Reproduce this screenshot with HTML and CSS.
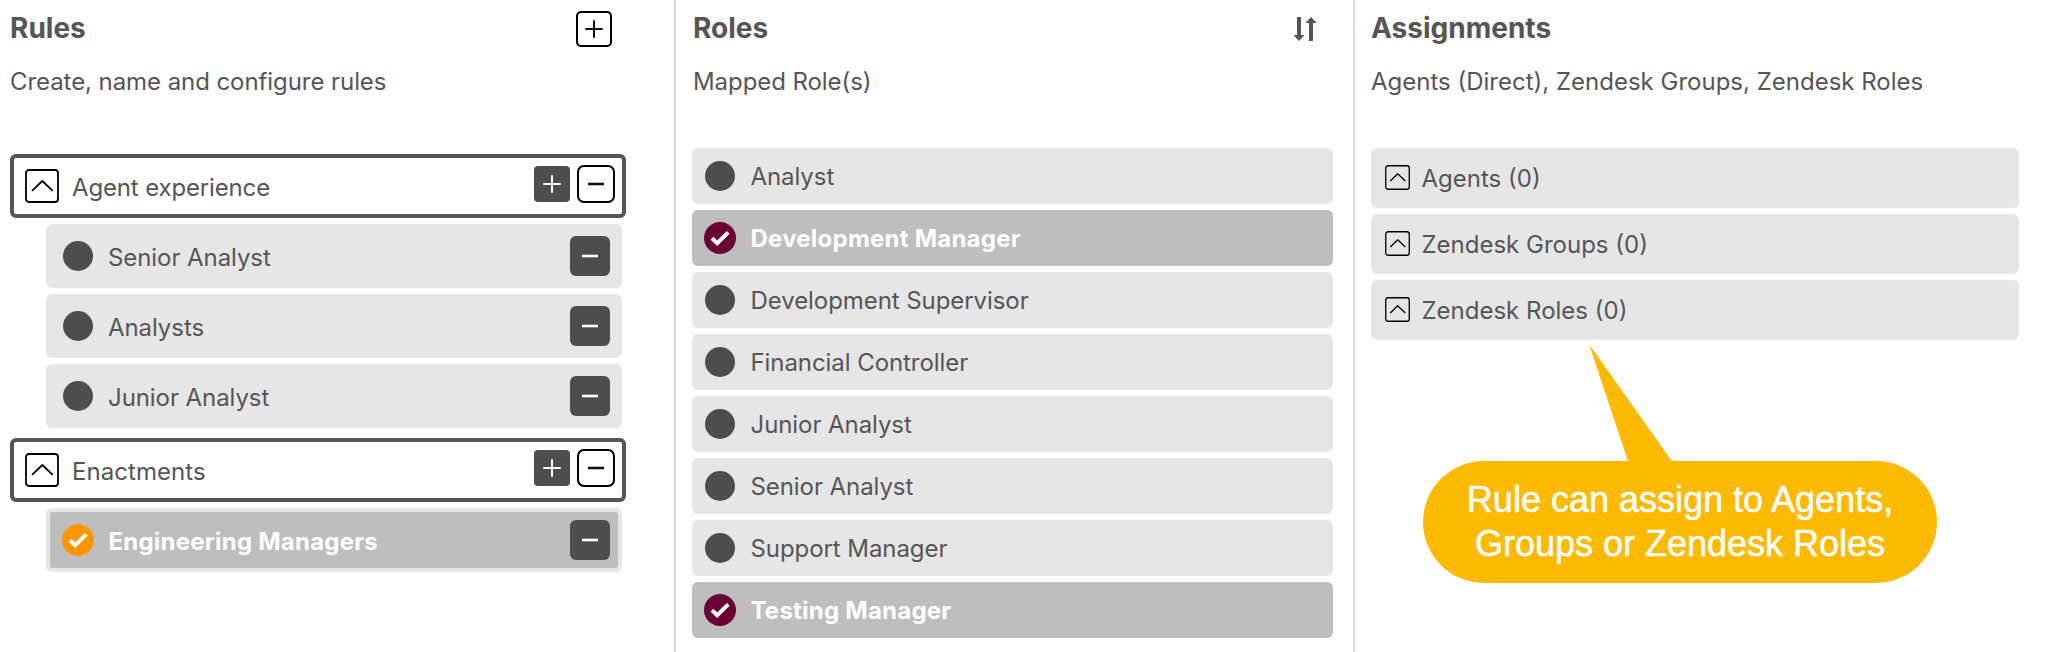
FILE: index.html
```html
<!DOCTYPE html>
<html lang="en">
<head>
<meta charset="utf-8">
<title>Rules</title>
<link rel="stylesheet" href="styles.css">
</head>
<body>
<svg class="defs" width="0" height="0" aria-hidden="true">
  <symbol id="chevron" viewBox="0 0 34 34"><rect x="1" y="1" width="32" height="32" rx="3" fill="none" stroke="#000" stroke-width="1.8"/><path d="M7.5 21.3 17.3 12 27.2 21.3" fill="none" stroke="#000" stroke-width="1.8" stroke-linecap="round" stroke-linejoin="round"/></symbol>
  <symbol id="plus" viewBox="0 0 36 36"><path d="M18 10v16M10 18h16" fill="none" stroke="currentColor" stroke-width="2" stroke-linecap="round"/></symbol>
  <symbol id="minus" viewBox="0 0 36 36"><path d="M10 18h16" fill="none" stroke="currentColor" stroke-width="2.6"/></symbol>
  <symbol id="check" viewBox="0 0 32 32"><circle cx="16" cy="16" r="16" fill="currentColor"/><path d="M8 16.2 13.2 21.2 24.3 10.4" fill="none" stroke="#fff" stroke-width="4"/></symbol>
</svg>
<main class="board">
  <section class="column rules">
    <header class="head"><h2>Rules</h2><button class="btn outline add"><svg><use href="#plus"/></svg></button></header>
    <p class="sub">Create, name and configure rules</p>
    <div class="group"><svg class="chev"><use href="#chevron"/></svg><span class="label">Agent experience</span><button class="btn dark"><svg><use href="#plus"/></svg></button><button class="btn outline big"><svg><use href="#minus"/></svg></button></div>
    <ul class="children">
      <li class="item"><i class="dot"></i><span class="label">Senior Analyst</span><button class="btn dark rm"><svg><use href="#minus"/></svg></button></li>
      <li class="item"><i class="dot"></i><span class="label">Analysts</span><button class="btn dark rm"><svg><use href="#minus"/></svg></button></li>
      <li class="item"><i class="dot"></i><span class="label">Junior Analyst</span><button class="btn dark rm"><svg><use href="#minus"/></svg></button></li>
    </ul>
    <div class="group second"><svg class="chev"><use href="#chevron"/></svg><span class="label">Enactments</span><button class="btn dark"><svg><use href="#plus"/></svg></button><button class="btn outline big"><svg><use href="#minus"/></svg></button></div>
    <ul class="children">
      <li class="item active"><svg class="tick orange"><use href="#check"/></svg><span class="label">Engineering Managers</span><button class="btn dark rm"><svg><use href="#minus"/></svg></button></li>
    </ul>
  </section>
  <section class="column roles">
    <header class="head"><h2>Roles</h2><svg class="sort" viewBox="0 0 24 24"><path d="M4 0h4v18h3.6L6 24 .4 18H4zM16 24h4V6h3.6L18 0l-5.6 6H16z" fill="#555"/></svg></header>
    <p class="sub">Mapped Role(s)</p>
    <ul class="list">
      <li class="role"><i class="dot"></i><span>Analyst</span></li>
      <li class="role active"><svg class="tick"><use href="#check"/></svg><span>Development Manager</span></li>
      <li class="role"><i class="dot"></i><span>Development Supervisor</span></li>
      <li class="role"><i class="dot"></i><span>Financial Controller</span></li>
      <li class="role"><i class="dot"></i><span>Junior Analyst</span></li>
      <li class="role"><i class="dot"></i><span>Senior Analyst</span></li>
      <li class="role"><i class="dot"></i><span>Support Manager</span></li>
      <li class="role active"><svg class="tick"><use href="#check"/></svg><span>Testing Manager</span></li>
    </ul>
  </section>
  <section class="column assignments">
    <header class="head"><h2>Assignments</h2></header>
    <p class="sub">Agents (Direct), Zendesk Groups, Zendesk Roles</p>
    <ul class="list">
      <li class="assign"><svg class="chev"><use href="#chevron"/></svg><span>Agents (0)</span></li>
      <li class="assign"><svg class="chev"><use href="#chevron"/></svg><span>Zendesk Groups (0)</span></li>
      <li class="assign"><svg class="chev"><use href="#chevron"/></svg><span>Zendesk Roles (0)</span></li>
    </ul>
  </section>
</main>
<aside class="callout">
  <svg class="tail" viewBox="0 0 84 118"><path d="M0 0 39.3 118H83.5z" fill="#fcba03"/></svg>
  <div>Rule can assign to Agents,</div>
  <div>Groups or Zendesk Roles</div>
</aside>
</body>
</html>
```

FILE: styles.css
```css
* { box-sizing: border-box; }
body { margin: 0; background: #fff; color: #555; font: 24px/30px Inter, "Liberation Sans", sans-serif; letter-spacing: -0.07px; overflow: hidden; }
.defs { display: block; }
svg { display: block; flex: none; }
ul { list-style: none; margin: 0; padding: 0; }
button { padding: 0; border: 0; background: none; display: flex; align-items: center; justify-content: center; flex: none; }

.board { display: grid; grid-template-columns: 676px 679px 1fr; height: 652px; }
.column { padding-top: 9px; }
.rules { padding-left: 10px; padding-right: 48px; border-right: 2px solid #d8d8d8; }
.roles { padding-left: 16px; padding-right: 20px; border-right: 2px solid #d8d8d8; }
.assignments { padding-left: 16px; padding-right: 27px; }

.head { height: 40px; display: flex; align-items: center; justify-content: space-between; }
.rules .head { padding-right: 14px; }
.roles .head { padding: 0 16px 0 1px; }
h2 { margin: 0 0 2px; font-size: 28px; font-weight: 700; line-height: 38px; letter-spacing: 0; }
.sort { width: 24px; height: 24px; }
.sub { margin: 18px 0 51px; line-height: 30px; }
.rules .sub { margin-bottom: 57px; }
.roles .sub { padding-left: 1px; }
.assignments .sub { letter-spacing: 0; }

.btn svg { width: 36px; height: 36px; }
.dark { width: 36px; height: 36px; border-radius: 4px; background: #4d4d4d; color: #fff; }
.outline { width: 36px; height: 36px; border: 2px solid #000; border-radius: 5px; color: #111; }
.outline.big { width: 38px; height: 38px; border-radius: 7px; }
.dark.rm { width: 40px; height: 40px; border-radius: 6px; }

.label { flex: 1; padding-top: 3px; }
.group { width: 616px; height: 64px; display: flex; align-items: center; padding: 0 7px 4px 11px; border: 4px solid #555; border-radius: 6px; gap: 7px; letter-spacing: -0.15px; }
.group .chev { width: 34px; height: 34px; margin-top: 3px; }
.group .label { padding: 7px 0 0 6px; }
.group.second { margin-top: 10px; letter-spacing: 0.05px; }

.children { margin: 6px 0 0 36px; display: grid; gap: 6px; width: 576px; }
.item { height: 64px; display: flex; align-items: center; padding: 0 12px 0 17px; border-radius: 6px; background: #e6e6e6; }
.dot { width: 30px; height: 30px; border-radius: 50%; background: #4d4d4d; flex: none; }
.item .label { padding-left: 15px; }
.tick { width: 32px; height: 32px; color: #6b0035; }
.orange { color: #ff9500; }
.active { font-weight: 700; letter-spacing: 0.23px; color: #fff; background: #bebebe; }
.item.active { border: 4px solid #e6e6e6; padding: 0 8px 0 12px; }
.item.active .label { padding-left: 14.5px; }

.list { display: grid; gap: 6px; }
.role { height: 56px; display: flex; align-items: center; gap: 15.5px; padding-left: 13px; border-radius: 6px; background: #e6e6e6; }
.role span, .assign span { padding-top: 2px; }
.role.active { background: #bebebe; padding-left: 12px; gap: 14.5px; }
.assign { height: 60px; display: flex; align-items: center; gap: 12px; padding-left: 13.5px; border-radius: 6px; background: #e6e6e6; letter-spacing: 0; }
.assign .chev { width: 25px; height: 25px; margin-bottom: 1px; }

/* Floating note that points at the assignment list */
.callout { position: absolute; left: 1423px; top: 461px; width: 514px; height: 122px; padding: 17px 0; border-radius: 61px; background: #fcba03; color: #fff; font: 36px/44px "Liberation Sans", Arial, sans-serif; letter-spacing: 0; text-align: center; -webkit-text-stroke: 0.5px #fff; }
.callout .tail { position: absolute; left: 166px; top: -117px; width: 84px; height: 118px; }
```
